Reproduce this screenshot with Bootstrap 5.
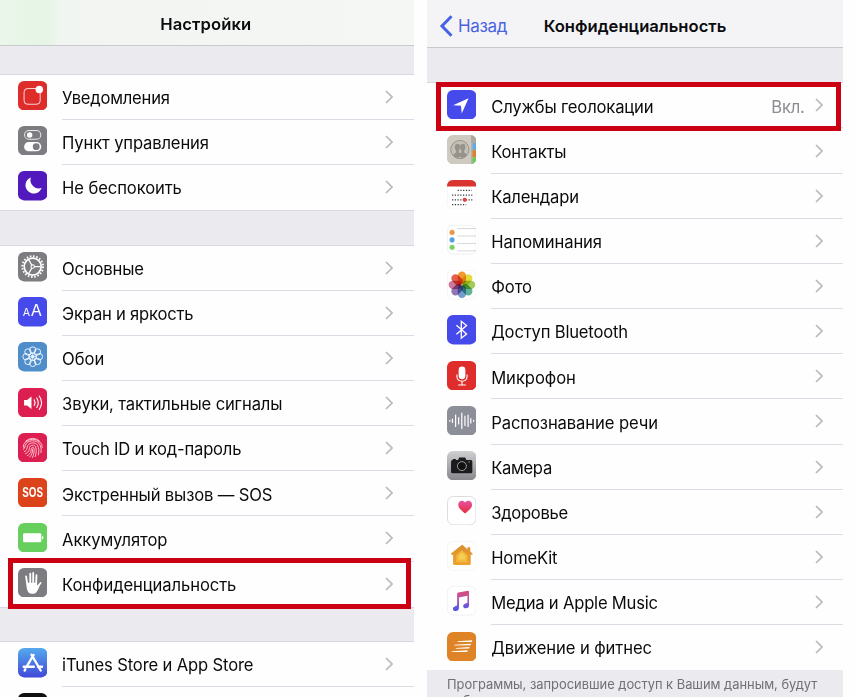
<!DOCTYPE html>
<html lang="ru">
<head>
<meta charset="utf-8">
<meta name="viewport" content="width=device-width, initial-scale=1">
<title>Настройки</title>
<link rel="stylesheet" href="https://cdn.jsdelivr.net/npm/bootstrap@5.3.0/dist/css/bootstrap.min.css">
<style>
body{font-family:Inter,"Liberation Sans",sans-serif;background:#fefefe;color:#0b0b0d;width:855px;height:697px}
.screen{height:697px;background:#fefefe}
.screen-main{width:413.5px;margin-right:13.5px}
.screen-privacy{width:416px}
.titlebar{font-weight:600;font-size:16.6px;border-bottom:1px solid #c9c9d0;line-height:20px}
.screen-main .titlebar{height:46px;background:linear-gradient(90deg,#eaf6ea 0,#e5f5e5 45px,#f1f5f1 62px,#f3f5f3 140px,#f5f7f5 100%);padding-top:2px;padding-right:2px}
.screen-privacy .titlebar{height:48px;background:#f4f4f7;padding-top:4px}
.back{left:12px;top:15px;color:#4a63e0;font-weight:400;font-size:17px;gap:5px}
.spacer{background:#ebeaef}
.h-first{height:27.6px}.h-mid{height:34px}.h-last{height:33.3px}.h-right{height:34.3px}
.group{border-top:1px solid #d9d7e2;border-bottom:1px solid #d9d7e2}
.item{height:45.1px;padding-left:17.5px}
.screen-privacy .item{height:45.17px;padding-left:20px}
.item>svg{width:29.4px;height:29.4px;margin-top:-3px;margin-right:15.2px}
.screen-privacy .item>svg{margin-right:14.8px}
.item-body{border-bottom:1px solid #dddbe3;font-size:16.6px;line-height:22px;padding-right:20.5px;padding-top:2.4px}
.item:last-child .item-body{border-bottom-color:transparent}
.chev{width:8px;height:14px;margin-top:-2.4px;fill:none;stroke:#b9b9be;stroke-width:1.7}
.value{color:#8c8c91;margin-right:10px}
.marked::after{content:"";position:absolute;border:5px solid #cb0013}
.mark-a::after{left:8px;right:2.5px;top:-4px;height:51px}
.mark-b::after{left:9px;right:2px;top:-1px;height:49px}
.note{background:#ebeaef;color:#707076;font-size:12.9px;line-height:16px;padding:7px 20px 0;white-space:nowrap}
</style>
<script src="https://cdn.jsdelivr.net/npm/bootstrap@5.3.0/dist/js/bootstrap.bundle.min.js"></script>
</head>
<body class="m-0 overflow-hidden">
<svg class="d-none">
<symbol id="chev" viewBox="0 0 8 14"><path d="M1 1l6 6-6 6"/></symbol>
</svg>
<main class="d-flex">
<section class="screen screen-main overflow-hidden flex-shrink-0">
 <header class="titlebar d-flex align-items-center justify-content-center"><span data-w="91">Настройки</span></header>
 <div class="spacer h-first"></div>
 <div class="group">
  <div class="item d-flex align-items-center"><svg viewBox="0 0 29 29"><rect width="29" height="29" rx="6" fill="#dd2c2a"/><path d="M18 7.3H10.3Q6 7.3 6 11.5v7.2Q6 23 10.3 23h7.2q4.4 0 4.4-4.3v-7.5" fill="none" stroke="#f9d0cd" stroke-width="1"/><circle cx="21" cy="8.3" r="3.7" fill="#fff"/></svg><div class="item-body d-flex align-items-center flex-grow-1 h-100"><span data-w="107.5">Уведомления</span><svg class="chev ms-auto"><use href="#chev"/></svg></div></div>
  <div class="item d-flex align-items-center"><svg viewBox="0 0 29 29"><rect width="29" height="29" rx="6" fill="#7d7c81"/><rect x="6.5" y="4.5" width="16" height="8.6" rx="4.3" fill="none" stroke="#e9e9ea"/><circle cx="11.5" cy="8.8" r="2.7" fill="#fff"/><rect x="6" y="15.8" width="17" height="9.2" rx="4.6" fill="#fff"/><circle cx="18" cy="20.4" r="3.4" fill="#7d7c81"/></svg><div class="item-body d-flex align-items-center flex-grow-1 h-100"><span data-w="146.5">Пункт управления</span><svg class="chev ms-auto"><use href="#chev"/></svg></div></div>
  <div class="item d-flex align-items-center"><svg viewBox="0 0 29 29"><rect width="29" height="29" rx="6" fill="#5219bd"/><path d="M12.7 6.3a8.2 8.2 0 1 0 10.6 10.5A8.4 8.4 0 0 1 12.7 6.3z" fill="#fff"/></svg><div class="item-body d-flex align-items-center flex-grow-1 h-100"><span data-w="119.5">Не беспокоить</span><svg class="chev ms-auto"><use href="#chev"/></svg></div></div>
 </div>
 <div class="spacer h-mid"></div>
 <div class="group">
  <div class="item d-flex align-items-center"><svg viewBox="0 0 29 29"><rect width="29" height="29" rx="6" fill="#7d7c81"/><g fill="none" stroke="#fff"><circle cx="14.5" cy="14.4" r="10.2" stroke-width="2" stroke-dasharray="1.55 1.654"/><circle cx="14.5" cy="14.4" r="8.4" stroke-width="1.6"/><circle cx="14.5" cy="14.4" r="1.7" stroke-width="1"/><path d="M16.2 14.4h6M13.6 12.9l-3.2-5.5M13.6 15.9l-3.2 5.5" stroke-width="1.2"/></g></svg><div class="item-body d-flex align-items-center flex-grow-1 h-100"><span data-w="81.5">Основные</span><svg class="chev ms-auto"><use href="#chev"/></svg></div></div>
  <div class="item d-flex align-items-center"><svg viewBox="0 0 29 29"><rect width="29" height="29" rx="6" fill="#474aea"/><g fill="#fff" font-family="Inter,sans-serif"><text x="4.8" y="19" font-size="10.5">A</text><text x="12.6" y="19" font-size="16">A</text></g></svg><div class="item-body d-flex align-items-center flex-grow-1 h-100"><span data-w="131">Экран и яркость</span><svg class="chev ms-auto"><use href="#chev"/></svg></div></div>
  <div class="item d-flex align-items-center"><svg viewBox="0 0 29 29"><rect width="29" height="29" rx="6" fill="#508ecb"/><g fill="none" stroke="#eef6fd" stroke-width=".95"><circle cx="14.5" cy="7.9" r="3.1"/><circle cx="19.2" cy="9.8" r="3.1"/><circle cx="21.1" cy="14.5" r="3.1"/><circle cx="19.2" cy="19.2" r="3.1"/><circle cx="14.5" cy="21.1" r="3.1"/><circle cx="9.8" cy="19.2" r="3.1"/><circle cx="7.9" cy="14.5" r="3.1"/><circle cx="9.8" cy="9.8" r="3.1"/><circle cx="14.5" cy="14.5" r="3.6"/><circle cx="14.5" cy="14.5" r="1.2" fill="#fff"/><path d="M14.5 10.8v7.4M10.8 14.5h7.4M11.9 11.9l5.2 5.2M17.1 11.9l-5.2 5.2" stroke-width=".7"/></g></svg><div class="item-body d-flex align-items-center flex-grow-1 h-100"><span data-w="42">Обои</span><svg class="chev ms-auto"><use href="#chev"/></svg></div></div>
  <div class="item d-flex align-items-center"><svg viewBox="0 0 29 29"><rect width="29" height="29" rx="6" fill="#dc1f50"/><path d="M6 11.8h3l4.3-3.4v12.2L9 17.2H6z" fill="#fff"/><path d="M16 11.7q1.6 2.8 0 5.6M18.5 9.8q3 4.7 0 9.4M21 7.9q4.5 6.6 0 13.2" fill="none" stroke="#fff" stroke-width="1.1" stroke-linecap="round"/></svg><div class="item-body d-flex align-items-center flex-grow-1 h-100"><span data-w="220">Звуки, тактильные сигналы</span><svg class="chev ms-auto"><use href="#chev"/></svg></div></div>
  <div class="item d-flex align-items-center"><svg viewBox="0 0 29 29"><rect width="29" height="29" rx="6" fill="#dc1f50"/><g fill="none" stroke="#ffc5d2" stroke-width=".95" stroke-linecap="round"><path d="M7.8 7.7q6.7-5 13.3 0M5.2 14q0-3 1.8-4.8 7.5-6 15 0 1.8 1.8 1.9 5M5.2 16.2c2-.8 1.2-3.7 3-6 3.2-3.3 9.4-3.3 12.6.1 2.3 2.7 2.2 6.4 1.9 9M6.2 18.4c3.2-1.2 2.3-4.2 3.7-6.5 2-2.8 7.2-2.8 9.2 0 2 3 1.6 7.2 1 9.8M7.4 20.5c4.6-2.2 3.4-5 4.2-6.9 1.1-2 4.7-2 5.8 0 1 3 .6 7-.4 9.7M9.3 22.3c4.4-2.8 3.5-5 3.9-7.2.4-1.3 2.2-1.3 2.6 0 .5 3-.2 6.5-1.5 9M14.5 15.8c.1 3-.8 5.7-2.8 7.8"/></g></svg><div class="item-body d-flex align-items-center flex-grow-1 h-100"><span data-w="179">Touch ID и код-пароль</span><svg class="chev ms-auto"><use href="#chev"/></svg></div></div>
  <div class="item d-flex align-items-center"><svg viewBox="0 0 29 29"><rect width="29" height="29" rx="6" fill="#dc431b"/><text x="4.2" y="18.7" textLength="20.6" lengthAdjust="spacingAndGlyphs" font-family="Inter,sans-serif" font-size="12.5" font-weight="700" fill="#fff">SOS</text></svg><div class="item-body d-flex align-items-center flex-grow-1 h-100"><span data-w="210">Экстренный вызов — SOS</span><svg class="chev ms-auto"><use href="#chev"/></svg></div></div>
  <div class="item d-flex align-items-center"><svg viewBox="0 0 29 29"><rect width="29" height="29" rx="6" fill="#66cf5e"/><rect x="5" y="10" width="18" height="9" rx="1.3" fill="#fff"/><path d="M23.7 12.6q1.4.3 1.4 1.9t-1.4 1.9z" fill="#fff"/></svg><div class="item-body d-flex align-items-center flex-grow-1 h-100"><span data-w="105">Аккумулятор</span><svg class="chev ms-auto"><use href="#chev"/></svg></div></div>
  <div class="item marked mark-a position-relative d-flex align-items-center"><svg viewBox="0 0 29 29"><rect width="29" height="29" rx="6" fill="#7d7c81"/><g stroke="#fff" stroke-width="1.8" stroke-linecap="round" fill="none"><path d="M9.1 15.8L8 8.4M12.1 15V5.7M15 15V4.9M17.9 15.5l.3-8.4M18.5 19.5l3.8-4.7"/></g><path d="M8.3 14.5h10.5v3.1l1.6-1.3 1 1.2q-2.1 5.7-4.2 7.3-4 1.4-6.6-.3-2.500-2.800-2.300-10z" fill="#fff"/></svg><div class="item-body d-flex align-items-center flex-grow-1 h-100"><span data-w="174">Конфиденциальность</span><svg class="chev ms-auto"><use href="#chev"/></svg></div></div>
 </div>
 <div class="spacer h-last"></div>
 <div class="group border-bottom-0">
  <div class="item d-flex align-items-center"><svg viewBox="0 0 29 29"><defs><linearGradient id="store" x2="0" y2="1"><stop stop-color="#55a9ed"/><stop offset="1" stop-color="#4149d9"/></linearGradient></defs><rect width="29" height="29" rx="6" fill="url(#store)"/><g stroke="#fff" stroke-width="2.3" stroke-linecap="round"><path d="M15.4 6.8L8.7 18.1M13.3 6.6l9.1 15.6M5.6 18.5h10M19.7 18.5h4M7.3 20.9l-.8 1.4"/></g></svg><div class="item-body d-flex align-items-center flex-grow-1 h-100"><span data-w="191">iTunes Store и App Store</span><svg class="chev ms-auto"><use href="#chev"/></svg></div></div>
  <div class="item d-flex align-items-center"><svg viewBox="0 0 29 29"><rect width="29" height="29" rx="6" fill="#101012"/></svg></div>
 </div>
</section>

<section class="screen screen-privacy overflow-hidden flex-shrink-0">
 <header class="titlebar position-relative d-flex align-items-center justify-content-center"><a class="back position-absolute d-flex align-items-center text-decoration-none" href="#"><svg width="14" height="22" viewBox="0 0 14 22" fill="none" stroke="#4663e4" stroke-width="3"><path d="M12.5 1.3L3 11l9.5 9.7"/></svg><span data-w="49">Назад</span></a><span data-w="182.5">Конфиденциальность</span></header>
 <div class="spacer h-right"></div>
 <div class="group border-bottom-0">
  <div class="item marked mark-b position-relative d-flex align-items-center"><svg viewBox="0 0 29 29"><rect width="29" height="29" rx="6" fill="#474aea"/><path d="M21.3 8.1L6 15.1l7.8.4.7 7.8z" fill="#fff"/></svg><div class="item-body d-flex align-items-center flex-grow-1 h-100"><span data-w="162">Службы геолокации</span><span class="value ms-auto" data-w="33">Вкл.</span><svg class="chev"><use href="#chev"/></svg></div></div>
  <div class="item d-flex align-items-center"><svg viewBox="0 0 29 29"><clipPath id="round"><rect width="29" height="29" rx="6"/></clipPath><g clip-path="url(#round)"><path fill="#cfcabf" d="M0 0h29v29H0z"/><path fill="#aaa89f" d="M24 0h5v8h-5z"/><path fill="#62abe3" d="M25 8h4v7h-4z"/><path fill="#df812b" d="M25 15h4v7h-4z"/><path fill="#67cb58" d="M25 22h4v7h-4z"/><path fill="#aaa69c" d="M24 0h1v29h-1z"/></g><circle cx="12.7" cy="14.4" r="9" fill="#c5c0b6" stroke="#928e88" stroke-width=".9"/><g fill="#96918a"><path d="M6 20q1-2 3-2.7v-1.6q-1.6-2-1.4-4.5.3-2.6 2.7-2.5 2.6 0 2.6 2.7 0 2.5-1.2 4.2v1.7q2.3.7 2.9 2.6-2 3-4.5 2.6Q7.2 21.7 6 20z"/><path d="M12.7 18q1-.5 1.5-.8v-1.5q-1.4-2-1.3-4.5.3-2.5 2.6-2.5 2.6 0 2.6 2.8 0 2.4-1.2 4.2v1.6q2.2.7 2.9 2.5-3 3.2-5.8 2.8z"/></g></svg><div class="item-body d-flex align-items-center flex-grow-1 h-100"><span data-w="75">Контакты</span><svg class="chev ms-auto"><use href="#chev"/></svg></div></div>
  <div class="item d-flex align-items-center"><svg viewBox="0 0 29 29"><rect x=".3" y=".3" width="28.4" height="28.4" rx="6" fill="#fff" stroke="#eee" stroke-width=".6"/><path d="M0 6.5Q0 0 6 0h17q6 0 6 6.5z" fill="#d93430"/><g stroke="#34343a" stroke-width="1.2" stroke-dasharray="1.2 1.5"><path d="M10.5 10.3h14M5 14.9h20M5 19.6h20M5 24.2h14"/></g><circle cx="17.5" cy="19.6" r="2.1" fill="#e0443c"/></svg><div class="item-body d-flex align-items-center flex-grow-1 h-100"><span data-w="87.5">Календари</span><svg class="chev ms-auto"><use href="#chev"/></svg></div></div>
  <div class="item d-flex align-items-center"><svg viewBox="0 0 29 29"><rect x=".3" y=".3" width="28.4" height="28.4" rx="6" fill="#fff" stroke="#e6e6e6" stroke-width=".6"/><path d="M10 3.5h19M10 10.9h19M10 18.2h19M10 25.5h19" stroke="#cfcfd2" stroke-width=".8"/><g stroke-width="1" fill-opacity=".95" stroke-opacity=".4"><circle cx="5" cy="7.3" r="2.3" fill="#e5913b" stroke="#e5913b"/><circle cx="5" cy="14.7" r="2.3" fill="#4a9cda" stroke="#4a9cda"/><circle cx="5" cy="22" r="2.3" fill="#72cf56" stroke="#72cf56"/></g></svg><div class="item-body d-flex align-items-center flex-grow-1 h-100"><span data-w="110.5">Напоминания</span><svg class="chev ms-auto"><use href="#chev"/></svg></div></div>
  <div class="item d-flex align-items-center"><svg viewBox="0 0 29 29"><defs><rect id="petal" x="10.6" y="1.5" width="8.2" height="12.6" rx="4.1"/></defs><rect x=".3" y=".3" width="28.4" height="28.4" rx="6" fill="#fff" stroke="#eee" stroke-width=".6"/><g style="isolation:isolate"><use href="#petal" fill="#f19a33" style="mix-blend-mode:multiply"/><use href="#petal" fill="#e3dc3c" style="mix-blend-mode:multiply" transform="rotate(45 14.7 14.6)"/><use href="#petal" fill="#a4cb58" style="mix-blend-mode:multiply" transform="rotate(90 14.7 14.6)"/><use href="#petal" fill="#61b398" style="mix-blend-mode:multiply" transform="rotate(135 14.7 14.6)"/><use href="#petal" fill="#729dce" style="mix-blend-mode:multiply" transform="rotate(180 14.7 14.6)"/><use href="#petal" fill="#9374b4" style="mix-blend-mode:multiply" transform="rotate(225 14.7 14.6)"/><use href="#petal" fill="#cf789e" style="mix-blend-mode:multiply" transform="rotate(270 14.7 14.6)"/><use href="#petal" fill="#e5604c" style="mix-blend-mode:multiply" transform="rotate(315 14.7 14.6)"/></g></svg><div class="item-body d-flex align-items-center flex-grow-1 h-100"><span data-w="40.5">Фото</span><svg class="chev ms-auto"><use href="#chev"/></svg></div></div>
  <div class="item d-flex align-items-center"><svg viewBox="0 0 29 29"><rect width="29" height="29" rx="6" fill="#474aea"/><path d="M9.3 10l10 8.7-5.2 4.2V6.2l5.2 4.2-10 8.7" fill="none" stroke="#fff" stroke-width="1.3"/></svg><div class="item-body d-flex align-items-center flex-grow-1 h-100"><span data-w="136.5">Доступ Bluetooth</span><svg class="chev ms-auto"><use href="#chev"/></svg></div></div>
  <div class="item d-flex align-items-center"><svg viewBox="0 0 29 29"><rect width="29" height="29" rx="6" fill="#df2d2b"/><rect x="11.5" y="5.5" width="6.6" height="12.4" rx="3.3" fill="#fff"/><path d="M9.8 13.2v2.3q.4 4.2 5 4.500 4.600-.3 5-4.500v-2.300M14.800 20v3.500M11 23.700h7.600" fill="none" stroke="#fff" stroke-width="1.1"/></svg><div class="item-body d-flex align-items-center flex-grow-1 h-100"><span data-w="84.5">Микрофон</span><svg class="chev ms-auto"><use href="#chev"/></svg></div></div>
  <div class="item d-flex align-items-center"><svg viewBox="0 0 29 29"><rect width="29" height="29" rx="6" fill="#8c8e98"/><path d="M2.8 14.1v1M5.4 13v3.2M8.5 9v11.2M11.5 11.5v6.2M14.6 7v15.2M17.7 10v9.2M20.8 9v11.2M23.5 12.4v4.4M26.3 14.1v1" stroke="#fff" stroke-width="1.2" stroke-linecap="round"/></svg><div class="item-body d-flex align-items-center flex-grow-1 h-100"><span data-w="166.5">Распознавание речи</span><svg class="chev ms-auto"><use href="#chev"/></svg></div></div>
  <div class="item d-flex align-items-center"><svg viewBox="0 0 29 29"><defs><linearGradient id="cam" x2="0" y2="1"><stop stop-color="#cfcfd2"/><stop offset="1" stop-color="#87878c"/></linearGradient></defs><rect width="29" height="29" rx="6" fill="url(#cam)"/><path d="M5.5 9q0-1.2 1-1.2H8q1 0 1 1.2h2l1-2.5h6L19 9h4.5q1.5 0 1.5 1.5v10q0 1.5-1.5 1.5h-18Q4 22 4 20.5v-10Q4 9 5.5 9z" fill="#1b1b1e"/><circle cx="14.7" cy="14.9" r="4.4" fill="#111" stroke="#a6a6aa" stroke-width=".9"/><circle cx="21.8" cy="10.8" r=".6" fill="#d7a336"/></svg><div class="item-body d-flex align-items-center flex-grow-1 h-100"><span data-w="60.5">Камера</span><svg class="chev ms-auto"><use href="#chev"/></svg></div></div>
  <div class="item d-flex align-items-center"><svg viewBox="0 0 29 29"><defs><linearGradient id="heart" x2="0" y2="1"><stop stop-color="#e752a2"/><stop offset="1" stop-color="#e62d3b"/></linearGradient></defs><rect x=".5" y=".5" width="28" height="28" rx="6" fill="#fff" stroke="#d5d5d8" stroke-width=".8"/><path d="M17.8 17.2c-4-3.3-6.7-5.3-6.7-8.5 0-4.500 5-5.200 6.700-2.200 1.700-3 6.900-2.300 6.900 2.200 0 3.200-2.800 5.200-6.900 8.500z" fill="url(#heart)"/></svg><div class="item-body d-flex align-items-center flex-grow-1 h-100"><span data-w="76.5">Здоровье</span><svg class="chev ms-auto"><use href="#chev"/></svg></div></div>
  <div class="item d-flex align-items-center"><svg viewBox="0 0 29 29"><defs><linearGradient id="home" x2="0" y2="1"><stop stop-color="#d99030"/><stop offset="1" stop-color="#f0a02c"/></linearGradient></defs><rect x=".3" y=".3" width="28.4" height="28.4" rx="6" fill="#fff" stroke="#eee" stroke-width=".6"/><path d="M14.5 4L4 12.3q-.5 1 .3 1.2H6v9q0 1.3 1.3 1.3h14.9q1.2 0 1.2-1.3v-9h1.4q1-.4.3-1.2L22.9 10V6.200h-2.800v1.900L15.500 4q-.5-.4-1 0z" fill="url(#home)"/><path d="M14.7 9.2l5.5 4.5v7.2H9.2v-7.2z" fill="#f4b83c"/><path d="M14.7 11.5l3.2 2.8v4h-6.4v-4z" fill="#f5cf55"/></svg><div class="item-body d-flex align-items-center flex-grow-1 h-100"><span data-w="66">HomeKit</span><svg class="chev ms-auto"><use href="#chev"/></svg></div></div>
  <div class="item d-flex align-items-center"><svg viewBox="0 0 29 29"><defs><linearGradient id="tune" x1="0" y1="0" x2="0" y2="1"><stop stop-color="#dc4b72"/><stop offset=".4" stop-color="#b953a9"/><stop offset=".75" stop-color="#6c55da"/><stop offset="1" stop-color="#4a5ae0"/></linearGradient></defs><rect x=".3" y=".3" width="28.4" height="28.4" rx="6" fill="#fff" stroke="#e8e8ea" stroke-width=".6"/><path d="M10 8q0-1.3 1.2-1.5l9.5-1.9q1-.1 1 1v13.7q0 2.6-3 2.7-2.7 0-2.8-2.3 0-2 2.3-2.5l1.5-.4q.5-.2.5-.8V9.7l-8.4 1.7v10.300q-.2 2.900-3.200 3-2.700 0-2.800-2.300 0-1.900 2.200-2.500l1.400-.3q.6-.2.600-.8z" fill="url(#tune)"/></svg><div class="item-body d-flex align-items-center flex-grow-1 h-100"><span data-w="166.5">Медиа и Apple Music</span><svg class="chev ms-auto"><use href="#chev"/></svg></div></div>
  <div class="item d-flex align-items-center"><svg viewBox="0 0 29 29"><rect width="29" height="29" rx="6" fill="#df8426"/><g fill="#fff"><path d="M10.5 9.2l14.5-1-.6 1.6-13.9.1zM7.2 12.5l16.6-1-.6 1.6-16 .1zM8.7 15.8l13.7-1-.6 1.6-13.1.1zM4.8 19.1l15.7-1-.6 1.6-15.1.1z"/></g></svg><div class="item-body d-flex align-items-center flex-grow-1 h-100"><span data-w="160.5">Движение и фитнес</span><svg class="chev ms-auto"><use href="#chev"/></svg></div></div>
 </div>
 <div class="note h-100"><span data-w="370">Программы, запросившие доступ к Вашим данным, будут</span><br><span>добавлены в соответствующие категории выше.</span></div>
</section>
</main>
<script>
// Spread each label's tracking so it fills its set width.
document.querySelectorAll('[data-w]').forEach(function (el) {
  var n = el.textContent.length;
  el.style.whiteSpace = 'nowrap';
  el.style.letterSpacing = ((+el.dataset.w + .2 - el.getBoundingClientRect().width) / n).toFixed(3) + 'px';
});
</script>
</body>
</html>
